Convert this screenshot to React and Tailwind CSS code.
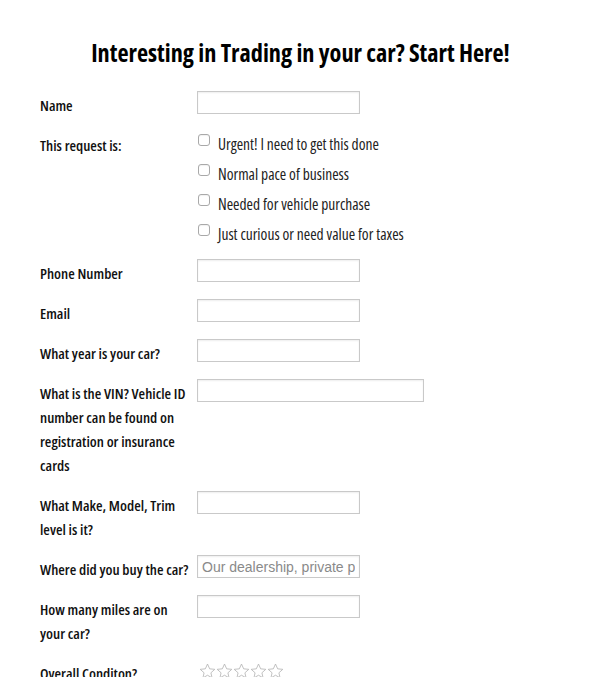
import React from "react";

function Row({ label, children, className = "mb-[14px]" }) {
	return (
		<div className={`flex ${className}`}>
			<div className="w-[157px] shrink-0 pt-[2px] pr-[6px] text-[15px] leading-6 font-semibold text-[#111]">{label}</div>
			<div>{children}</div>
		</div>
	);
}

function TextInput({ wide, placeholder }) {
	return (
		<input
			type="text"
			placeholder={placeholder}
			className={`block ${wide ? "w-[227px]" : "w-[163px]"} h-[23px] border border-[#c9c9c9] bg-white px-[4px] font-['Liberation_Sans',Arial,sans-serif] [font-stretch:normal] text-[14px] text-[#555] placeholder:text-[#8a8a8a] shadow-[inset_0_1px_2px_rgba(0,0,0,0.07)] outline-none`}
		/>
	);
}

function Star() {
	return (
		<svg width="17" height="16" viewBox="0 0 24 23" fill="none" stroke="#b5b5b5" strokeWidth="1.2">
			<path d="M12 1.5l3.1 6.9 7.4.7-5.6 5 1.7 7.3L12 17.6l-6.6 3.8 1.7-7.3-5.6-5 7.4-.7z" />
		</svg>
	);
}

const options = [
	"Urgent! I need to get this done",
	"Normal pace of business",
	"Needed for vehicle purchase",
	"Just curious or need value for taxes",
];

export default function App() {
	return (
		<div className="w-[601px] h-[677px] overflow-hidden bg-white font-['Open_Sans',sans-serif] [font-stretch:condensed]">
			<h1 className="pt-[38px] text-center text-[24.25px] leading-[30px] font-bold text-black">
				Interesting in Trading in your car? Start Here!
			</h1>
			<div className="pl-[40px] pt-[23px]">
				<Row label="Name">
					<TextInput />
				</Row>
				<Row label="This request is:" className="mb-2">
					{options.map((o) => (
						<div key={o} className="flex h-[30px]">
							<span className="mt-[3px] ml-[1px] w-[12px] h-[12px] rounded-[3px] border border-[#a9a9a9] bg-white shadow-[inset_0_1px_1px_rgba(0,0,0,0.06)]" />
							<span className="ml-[8px] mt-[1px] text-[15.5px] leading-6 text-[#222]">{o}</span>
						</div>
					))}
				</Row>
				<Row label="Phone Number">
					<TextInput />
				</Row>
				<Row label="Email">
					<TextInput />
				</Row>
				<Row label="What year is your car?">
					<TextInput />
				</Row>
				<Row label="What is the VIN? Vehicle ID number can be found on registration or insurance cards">
					<TextInput wide />
				</Row>
				<Row label="What Make, Model, Trim level is it?">
					<TextInput />
				</Row>
				<Row label="Where did you buy the car?">
					<TextInput placeholder="Our dealership, private party, auction" />
				</Row>
				<Row label="How many miles are on your car?">
					<TextInput />
				</Row>
				<Row label="Overall Conditon?">
					<div className="flex pt-[4px] pl-[2px]">
						<Star />
						<Star />
						<Star />
						<Star />
						<Star />
					</div>
				</Row>
			</div>
		</div>
	);
}
